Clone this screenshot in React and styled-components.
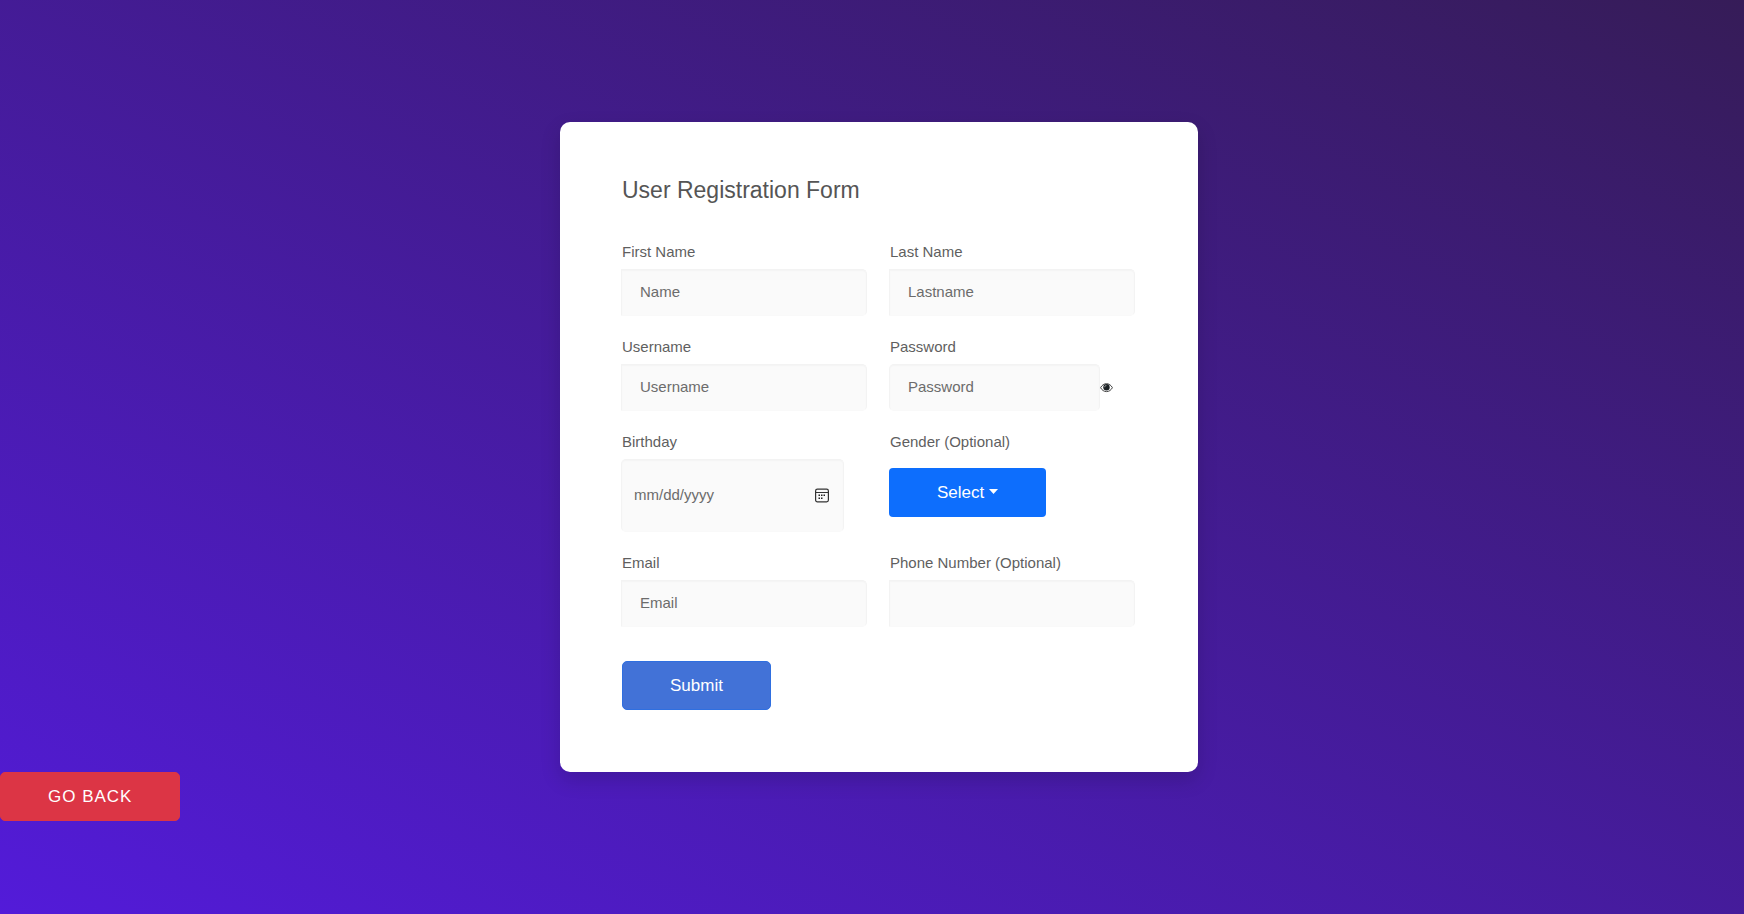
import React from "react";
import styled, { createGlobalStyle } from "styled-components";

const GlobalStyle = createGlobalStyle`
  *, *::before, *::after { box-sizing: border-box; }
  html, body { margin: 0; min-height: 100%; }
  body, button, input, select {
    font-family: "Liberation Sans", Arial, Helvetica, sans-serif;
  }
`;

const Page = styled.div`
  min-height: 100vh;
  display: flex;
  flex-direction: column;
  align-items: flex-start;
  background: linear-gradient(26deg, #531bd9, #361c58);
`;

const Main = styled.main`
  width: 100%;
  display: flex;
  justify-content: center;
  padding: 122px 0 0 14px;
`;

const Card = styled.form`
  width: 100%;
  max-width: 638px;
  padding: 54px 63px 62px 61px;
  border-radius: 10px;
  background: #fff;
  box-shadow: 0 8px 20px rgba(0, 0, 0, 0.15);
`;

const Title = styled.h1`
  margin: 0 0 38px 1px;
  font-size: 23px;
  line-height: 28px;
  font-weight: 400;
  color: #555;
`;

const Fields = styled.div`
  display: grid;
  grid-template-columns: repeat(2, minmax(0, 1fr));
  gap: 21px 22px;
`;

const Field = styled.div`
  display: flex;
  flex-direction: column;
  align-items: flex-start;
  gap: ${({ $gap }) => $gap || "7px"};
`;

const Label = styled.label`
  padding-left: 1px;
  font-size: 15px;
  line-height: 20px;
  color: #5f5f5f;
`;

const Input = styled.input`
  width: 100%;
  height: 47px;
  padding: 0 18px 2px;
  border: 1px solid #f3f3f3;
  border-bottom-color: #f9f9f9;
  border-radius: ${({ $rounded }) => ($rounded ? "5px" : "0 5px 5px 0")};
  outline: none;
  background: #fafafa;
  box-shadow: inset 0 1px 1px #f4f4f4;
  font-size: 15px;
  color: #5f5f5f;

  &::placeholder {
    color: #6c6c6c;
    opacity: 1;
  }
`;

const PasswordRow = styled.div`
  width: 100%;
  display: flex;
  align-items: center;
  padding-right: 22px;
`;

const EyeButton = styled.button`
  flex: none;
  display: flex;
  padding: 0;
  border: 0;
  background: none;
  cursor: pointer;
`;

const DateBox = styled.div`
  position: relative;
  width: 100%;
  max-width: 223px;
`;

const DateInput = styled(Input)`
  display: block;
  height: 73px;
  padding: 0 12px 2px;
  color: #6c6c6c;

  &::-webkit-datetime-edit,
  &::-webkit-datetime-edit-fields-wrapper,
  &::-webkit-datetime-edit-month-field,
  &::-webkit-datetime-edit-day-field,
  &::-webkit-datetime-edit-year-field {
    padding: 0;
  }

  &::-webkit-calendar-picker-indicator {
    opacity: 0;
  }
`;

const CalendarIcon = styled.svg`
  position: absolute;
  right: 15px;
  top: 29px;
  pointer-events: none;
`;

const SelectBox = styled.div`
  position: relative;
  width: 157px;
`;

const Select = styled.select`
  appearance: none;
  display: block;
  width: 100%;
  height: 49px;
  padding: 0 48px;
  border: 0;
  border-radius: 4px;
  background: #0d6efd;
  font-size: 17px;
  color: #fff;
`;

const Caret = styled.svg`
  position: absolute;
  right: 48px;
  top: 21px;
  pointer-events: none;
`;

const Button = styled.button`
  height: 49px;
  padding: 0 47px;
  border: 1px solid ${({ $edge }) => $edge};
  border-radius: 5px;
  background: ${({ $fill }) => $fill};
  font-size: 17px;
  letter-spacing: ${({ $spaced }) => ($spaced ? "1px" : "normal")};
  text-transform: ${({ $spaced }) => ($spaced ? "uppercase" : "none")};
  color: #fff;
  cursor: pointer;
`;

const Actions = styled.div`
  padding: 34px 1px 0;
`;

function TextField({ id, label, ...rest }) {
  return (
    <Field>
      <Label htmlFor={id}>{label}</Label>
      <Input id={id} {...rest} />
    </Field>
  );
}

export default function App() {
  return (
    <>
      <GlobalStyle />
      <Page>
        <Main>
          <Card onSubmit={(e) => e.preventDefault()}>
            <Title>User Registration Form</Title>
            <Fields>
              <TextField id="first" label="First Name" type="text" placeholder="Name" />
              <TextField id="last" label="Last Name" type="text" placeholder="Lastname" />
              <TextField id="user" label="Username" type="text" placeholder="Username" />
              <Field>
                <Label htmlFor="password">Password</Label>
                <PasswordRow>
                  <Input id="password" type="password" placeholder="Password" $rounded />
                  <EyeButton type="button" aria-label="Show password">
                    <svg width="13" height="11" viewBox="0 0 13 11">
                      <path
                        d="M.6 5.7C2 3.1 4 1.7 6.5 1.7s4.500 1.400 5.900 4c-1.400 2.500-3.400 3.900-5.900 3.900S2 8.200.6 5.700Z"
                        fill="#fff"
                        stroke="#444"
                        strokeWidth="1"
                      />
                      <circle cx="6.5" cy="5.300" r="3.200" fill="#1c2225" />
                      <path d="M4.700 5.200c0-1 .7-1.800 1.700-1.800" fill="none" stroke="#c8c8c8" strokeWidth=".8" />
                    </svg>
                  </EyeButton>
                </PasswordRow>
              </Field>
              <Field>
                <Label htmlFor="birthday">Birthday</Label>
                <DateBox>
                  <DateInput id="birthday" type="date" $rounded />
                  <CalendarIcon width="14" height="15" viewBox="0 0 14 15">
                    <rect x=".6" y="1.100" width="12.800" height="12.800" rx="1.800" fill="none" stroke="#333" strokeWidth="1.200" />
                    <path d="M1 4.500h12" stroke="#333" strokeWidth="1" />
                    <path
                      d="M6 6.500h1.500V8H6zM8.500 6.500H10V8H8.500zM3.500 9.500H5V11H3.500zM6 9.500h1.500V11H6zM3.500 6.500H5V8H3.500z"
                      fill="#222"
                    />
                  </CalendarIcon>
                </DateBox>
              </Field>
              <Field $gap="16px">
                <Label htmlFor="gender">Gender (Optional)</Label>
                <SelectBox>
                  <Select id="gender" defaultValue="">
                    <option value="">Select</option>
                    <option>Male</option>
                    <option>Female</option>
                    <option>Other</option>
                  </Select>
                  <Caret width="9" height="5" viewBox="0 0 9 5">
                    <path d="M0 0h9L4.500 5Z" fill="#fff" />
                  </Caret>
                </SelectBox>
              </Field>
              <TextField id="email" label="Email" type="email" placeholder="Email" />
              <TextField id="phone" label="Phone Number (Optional)" type="tel" />
            </Fields>
            <Actions>
              <Button type="submit" $fill="#4272d7" $edge="#2f6fe0">
                Submit
              </Button>
            </Actions>
          </Card>
        </Main>
        <Button type="button" $fill="#dc3545" $edge="#dc3545" $spaced>
          Go back
        </Button>
      </Page>
    </>
  );
}
